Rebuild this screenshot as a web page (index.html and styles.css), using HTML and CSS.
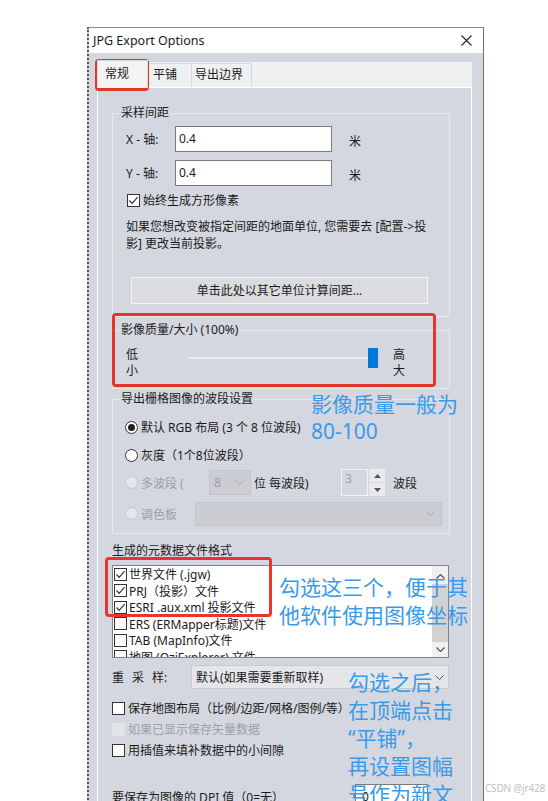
FILE: index.html
```html
<!doctype html>
<html lang="zh-CN">
  <head>
    <meta charset="UTF-8" />
    <meta name="viewport" content="width=device-width, initial-scale=1.0" />
    <title>JPG Export Options</title>
    <link rel="stylesheet" href="styles.css">
  </head>
  <body>
    <div class="dialog">
      <div class="titlebar">
        <span>JPG Export Options</span>
        <svg class="close" width="11" height="11" viewBox="0 0 11 11">
          <path d="M0.5 0.5 L10.5 10.5 M10.5 0.5 L0.5 10.5" stroke="#222" stroke-width="1.1" fill="none" />
        </svg>
      </div>

      <div class="dlg-body">
        <div class="tab-row">
          <div class="tab active">常规</div>
          <div class="tab tab-tile">平铺</div>
          <div class="tab tab-extent">导出边界</div>
        </div>

        <div class="pane">
          <!-- sampling distance -->
          <fieldset class="group group-spacing">
            <legend>采样间距</legend>
            <div class="axis-row">
              <span class="axis-label">X - 轴:</span>
              <div class="textbox">0.4</div>
              <span class="unit">米</span>
            </div>
            <div class="axis-row second">
              <span class="axis-label">Y - 轴:</span>
              <div class="textbox">0.4</div>
              <span class="unit">米</span>
            </div>
            <div class="check-row square">
              <span class="cb"><svg width="11" height="11" viewBox="0 0 11 11"><polyline points="1.5,5.5 4.2,8.3 9.6,2.2" fill="none" stroke="#333" stroke-width="1.2" /></svg></span>
              <span>始终生成方形像素</span>
            </div>
            <div class="info">如果您想改变被指定间距的地面单位, 您需要去 [配置-&gt;投<br>影] 更改当前投影。</div>
            <div class="btn">单击此处以其它单位计算间距...</div>
          </fieldset>

          <!-- quality -->
          <fieldset class="group group-quality">
            <legend>影像质量/大小 (100%)</legend>
            <div class="quality">
              <div class="q-labels"><span>低</span><span>小</span></div>
              <div class="slider">
                <div class="track"></div>
                <div class="thumb"></div>
              </div>
              <div class="q-labels right"><span>高</span><span>大</span></div>
            </div>
          </fieldset>

          <!-- bands -->
          <fieldset class="group group-bands">
            <legend>导出栅格图像的波段设置</legend>
            <div class="radio-row">
              <span class="rb on"></span><span>默认 RGB 布局 (3 个 8 位波段)</span>
            </div>
            <div class="radio-row gray-row">
              <span class="rb"></span><span>灰度（1个8位波段）</span>
            </div>
            <div class="radio-row multi">
              <span class="rb off"></span><span class="muted multi-label">多波段 (</span>
              <div class="select small"><span>8</span>
                <svg width="9" height="5" viewBox="0 0 9 5"><polyline points="0.5,0.5 4.5,4.5 8.5,0.5" fill="none" stroke="#a9abb0" stroke-width="1" /></svg>
              </div>
              <span class="per-band">位 每波段)</span>
              <div class="spin-box">3</div>
              <div class="spin-btns">
                <span><svg width="7" height="4" viewBox="0 0 7 4"><polygon points="0,4 3.5,0 7,4" fill="#555" /></svg></span>
                <span><svg width="7" height="4" viewBox="0 0 7 4"><polygon points="0,0 3.5,4 7,0" fill="#555" /></svg></span>
              </div>
              <span class="band-unit">波段</span>
            </div>
            <div class="radio-row palette">
              <span class="rb off"></span><span class="muted palette-label">调色板</span>
              <div class="select wide">
                <svg width="9" height="5" viewBox="0 0 9 5"><polyline points="0.5,0.5 4.5,4.5 8.5,0.5" fill="none" stroke="#a9abb0" stroke-width="1" /></svg>
              </div>
            </div>
          </fieldset>

          <!-- metadata -->
          <div class="meta-label">生成的元数据文件格式</div>
          <div class="listbox">
            <div class="list-items">
              <div class="list-row"><span class="cb"><svg width="11" height="11" viewBox="0 0 11 11"><polyline points="1.5,5.5 4.2,8.3 9.6,2.2" fill="none" stroke="#333" stroke-width="1.2" /></svg></span><span>世界文件 (.jgw)</span></div>
              <div class="list-row"><span class="cb"><svg width="11" height="11" viewBox="0 0 11 11"><polyline points="1.5,5.5 4.2,8.3 9.6,2.2" fill="none" stroke="#333" stroke-width="1.2" /></svg></span><span>PRJ（投影）文件</span></div>
              <div class="list-row"><span class="cb"><svg width="11" height="11" viewBox="0 0 11 11"><polyline points="1.5,5.5 4.2,8.3 9.6,2.2" fill="none" stroke="#333" stroke-width="1.2" /></svg></span><span>ESRI .aux.xml 投影文件</span></div>
              <div class="list-row"><span class="cb"></span><span>ERS (ERMapper标题)文件</span></div>
              <div class="list-row"><span class="cb"></span><span>TAB (MapInfo)文件</span></div>
              <div class="list-row"><span class="cb"></span><span>地图 (OziExplorer) 文件</span></div>
            </div>
            <div class="scrollbar">
              <svg class="arrow-up" width="9" height="5" viewBox="0 0 9 5"><polyline points="0.5,4.5 4.5,0.5 8.5,4.5" fill="none" stroke="#555" stroke-width="1.2" /></svg>
              <div class="scroll-thumb"></div>
              <svg class="arrow-down" width="9" height="5" viewBox="0 0 9 5"><polyline points="0.5,0.5 4.5,4.5 8.5,0.5" fill="none" stroke="#555" stroke-width="1.2" /></svg>
            </div>
          </div>

          <div class="resample-row">
            <span class="resample-label"><span class="spaced">重采</span>样:</span>
            <div class="select resample">
              <span>默认(如果需要重新取样)</span>
              <svg width="9" height="5" viewBox="0 0 9 5"><polyline points="0.5,0.5 4.5,4.5 8.5,0.5" fill="none" stroke="#555" stroke-width="1" /></svg>
            </div>
          </div>

          <div class="check-row option first">
            <span class="cb"></span><span>保存地图布局（比例/边距/网格/图例/等）</span>
          </div>
          <div class="check-row option">
            <span class="cb disabled"></span><span class="muted">如果已显示保存矢量数据</span>
          </div>
          <div class="check-row option">
            <span class="cb"></span><span>用插值来填补数据中的小间隙</span>
          </div>

          <div class="dpi-row">
            <span class="dpi-label">要保存为图像的 DPI 值（0=无）</span>
            <div class="textbox dpi">0</div>
          </div>
        </div>
      </div>
    </div>

    <!-- annotations drawn over the screenshot -->
    <div class="mark mark-tab"></div>
    <div class="mark mark-quality"></div>
    <div class="mark mark-meta"></div>

    <div class="note note-quality">影像质量一般为<br>80-100</div>
    <div class="note note-meta">勾选这三个，便于其<br>他软件使用图像坐标</div>
    <div class="note note-tile">勾选之后，<br>在顶端点击<br>“平铺”，<br>再设置图幅<br>号作为新文</div>

    <div class="watermark">CSDN @jr428</div>
  </body>
</html>
```

FILE: styles.css
```css
html,
body {
  margin: 0;
  height: 801px;
  overflow: hidden;
}
body {
  position: relative;
  background: #fff;
  font-family: "Noto Sans", "Noto Sans CJK SC", sans-serif;
  font-size: 12px;
  color: #1b1b1b;
}
.dialog {
  margin: 27px 0 0 87px;
  width: 397px;
  box-sizing: border-box;
  border-top: 1px solid #8a8a8a;
  border-left: 2px dotted #555;
  border-right: 1px solid #6e6e6e;
  background: #d4d7df;
}
.titlebar {
  height: 25px;
  background: #fff;
  display: flex;
  align-items: center;
  justify-content: space-between;
  padding: 0 11px 0 4px;
  font-size: 12.5px;
}
.dlg-body {
  padding: 9px 11px 0 8px;
}
.tab-row {
  display: flex;
  align-items: flex-end;
  height: 25px;
  background: #eef0f2;
}
.tab {
  box-sizing: border-box;
  height: 24px;
  line-height: 22px;
  border: 1px solid #d8d9dc;
  border-bottom: none;
}
.tab.active {
  width: 51px;
  height: 28px;
  line-height: 25px;
  padding-left: 7px;
  margin-bottom: -1px;
  background: #f4f4f5;
  position: relative;
  z-index: 1;
}
.tab-tile {
  width: 44px;
  padding-left: 4px;
}
.tab-extent {
  width: 61px;
  padding-left: 3px;
  margin-left: -1px;
}
.pane {
  border: 1px solid #fff;
  background: #d4d7df;
  padding-bottom: 40px;
}

/* group boxes */
.group {
  margin: 0 0 0 14px;
  width: 338px;
  min-width: 0;
  box-sizing: border-box;
  border: 1px solid #e6e8ec;
  padding: 0 0 0 13px;
}
.group legend {
  padding: 0 1px;
  margin-left: -6px;
  line-height: 16px;
}
.group-spacing {
  margin-top: 17px;
  padding-top: 5px;
  padding-bottom: 12px;
}
.axis-row {
  display: flex;
  align-items: center;
  height: 26px;
}
.axis-row.second {
  margin-top: 8px;
}
.axis-label {
  width: 49px;
}
.textbox {
  width: 157px;
  height: 26px;
  box-sizing: border-box;
  border: 1px solid #7a7a7a;
  background: #fff;
  padding-left: 3px;
  line-height: 24px;
}
.unit {
  margin-left: 17px;
  padding-top: 4px;
}
.check-row {
  display: flex;
  align-items: center;
  gap: 3px;
  height: 16px;
}
.check-row.square {
  margin-top: 6px;
  margin-left: 1px;
}
.cb {
  width: 13px;
  height: 13px;
  box-sizing: border-box;
  border: 1px solid #333;
  background: #fff;
  display: flex;
  align-items: center;
  justify-content: center;
  flex: none;
}
.cb.disabled {
  border-color: #e2e4e8;
  background: #e2e4e8;
}
.info {
  margin-top: 10px;
  line-height: 17px;
  white-space: nowrap;
}
.btn {
  margin: 25px 0 0 5px;
  width: 297px;
  height: 27px;
  box-sizing: border-box;
  border: 1px solid #f3f3f4;
  background: #dbdcdf;
  text-align: center;
  line-height: 25px;
}

.group-quality {
  margin-top: 5px;
  padding-top: 9px;
  padding-bottom: 9px;
}
.quality {
  display: flex;
  height: 32px;
}
.q-labels {
  display: flex;
  flex-direction: column;
  line-height: 16px;
  width: 62px;
}
.q-labels.right {
  margin-left: 15px;
  width: auto;
}
.slider {
  width: 190px;
  position: relative;
}
.track {
  margin-top: 10px;
  width: 182px;
  height: 2px;
  background: #e8e9ec;
}
.thumb {
  position: absolute;
  left: 180px;
  top: 1px;
  width: 10px;
  height: 20px;
  background: #0078d7;
}

.group-bands {
  margin-top: 2px;
  padding: 12px 0 7px 12px;
}
.group-bands legend {
  margin-left: -5px;
}
.radio-row {
  display: flex;
  align-items: center;
  gap: 3px;
  height: 16px;
}
.radio-row.gray-row {
  margin-top: 12px;
}
.radio-row.multi {
  margin-top: 6px;
  height: 27px;
}
.radio-row.palette {
  margin-top: 5px;
  height: 25px;
}
.rb {
  width: 13px;
  height: 13px;
  box-sizing: border-box;
  border: 1px solid #333;
  border-radius: 50%;
  background: #fff;
  display: flex;
  align-items: center;
  justify-content: center;
  flex: none;
}
.rb.on::after {
  content: "";
  width: 7px;
  height: 7px;
  border-radius: 50%;
  background: #222;
}
.rb.off {
  border-color: #c4c6cb;
  background: #e4e6ea;
}
.muted {
  color: #9d9fa5;
}
.multi-label {
  width: 65px;
}
.palette-label {
  width: 51px;
}
.select {
  box-sizing: border-box;
  display: flex;
  align-items: center;
  justify-content: space-between;
  border: 1px solid #c3c5ca;
  background: #cbcdd3;
  color: #9d9fa5;
  padding: 0 6px 0 4px;
}
.select.small {
  width: 42px;
  height: 25px;
}
.select.wide {
  width: 247px;
  height: 24px;
  justify-content: flex-end;
}
.per-band {
  width: 84px;
}
.spin-box {
  box-sizing: border-box;
  width: 27px;
  height: 27px;
  border: 1px solid #f1f2f4;
  color: #9d9fa5;
  padding: 1px 0 0 3px;
  line-height: 16px;
}
.spin-btns {
  margin-left: -2px;
  width: 16px;
  height: 27px;
  display: flex;
  flex-direction: column;
  gap: 1px;
}
.spin-btns span {
  flex: 1;
  background: #e9eaed;
  display: flex;
  align-items: center;
  justify-content: center;
}
.band-unit {
  margin-left: 5px;
}

/* metadata list */
.meta-label {
  margin: 9px 0 0 14px;
  line-height: 16px;
}
.listbox {
  margin: 6px 0 0 14px;
  width: 337px;
  height: 93px;
  box-sizing: border-box;
  border: 1px solid #7f838a;
  background: #fff;
  display: flex;
  overflow: hidden;
}
.list-items {
  flex: 1;
  padding-left: 1px;
}
.list-row {
  display: flex;
  align-items: center;
  gap: 2px;
  height: 16.5px;
  white-space: nowrap;
}
.scrollbar {
  width: 16px;
  background: #f0f0f0;
  display: flex;
  flex-direction: column;
  align-items: center;
}
.arrow-up {
  margin-top: 8px;
}
.scroll-thumb {
  margin-top: 5px;
  width: 16px;
  height: 58px;
  background: #d2d2d2;
}
.arrow-down {
  margin-top: 5px;
}

.resample-row {
  margin: 7px 0 0 14px;
  display: flex;
  align-items: center;
  height: 24px;
}
.resample-label {
  width: 79px;
}
.resample-label .spaced {
  letter-spacing: 8px;
}
.select.resample {
  width: 258px;
  height: 24px;
  background: #e5e6e9;
  border-color: #c8cacd;
  color: #1b1b1b;
  padding-right: 4px;
}

.check-row.option {
  margin: 5px 0 0 14px;
}
.check-row.option.first {
  margin-top: 11px;
}
.dpi-row {
  margin: 26px 0 0 14px;
  display: flex;
  align-items: center;
  height: 26px;
}
.dpi-label {
  width: 243px;
}
.textbox.dpi {
  width: 73px;
  padding-left: 6px;
}

/* red frames and blue notes painted on the screenshot */
.mark {
  position: absolute;
  box-sizing: border-box;
  border: 3px solid #e6352b;
  border-radius: 4px;
}
.mark-tab {
  left: 95px;
  top: 59px;
  width: 54px;
  height: 32px;
}
.mark-quality {
  left: 112px;
  top: 313px;
  width: 324px;
  height: 74px;
}
.mark-meta {
  left: 105px;
  top: 557px;
  width: 167px;
  height: 60px;
}
.note {
  position: absolute;
  color: #3b9ae8;
  font-size: 21px;
  line-height: 28px;
  white-space: nowrap;
}
.note-quality {
  left: 311px;
  top: 391px;
  line-height: 27px;
}
.note-meta {
  left: 279px;
  top: 573px;
}
.note-tile {
  left: 348px;
  top: 668px;
}
.watermark {
  position: absolute;
  left: 485px;
  top: 781px;
  font-size: 10px;
  letter-spacing: -0.2px;
  color: #c2c2c2;
}
```
